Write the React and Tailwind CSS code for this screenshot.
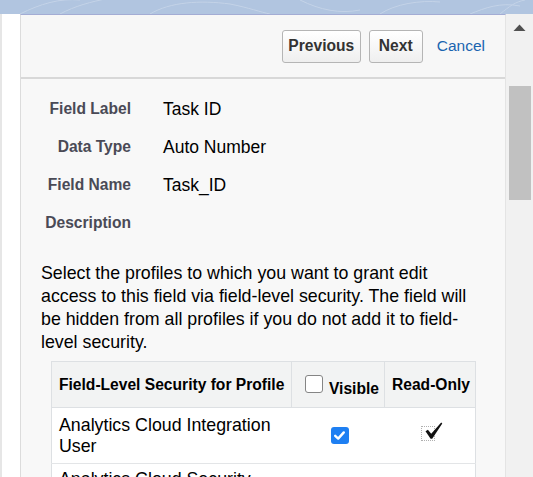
import React from "react";

const font = { fontFamily: '"Liberation Sans", Arial, sans-serif' };

function Field({ label, value }) {
  return (
    <div className="flex h-[38px] items-center">
      <div className="w-[110px] text-right text-[15.6px] font-bold text-[#4a4a56]">{label}</div>
      <div className="ml-[32px] text-[17.5px] text-black">{value}</div>
    </div>
  );
}

function BlueCheck() {
  return (
    <div className="flex h-[17px] w-[18px] items-center justify-center rounded-[3px] bg-[#1e7ff2]">
      <svg width="13" height="13" viewBox="0 0 13 13">
        <path d="M2.2 6.8 L5.2 9.6 L10.8 3.4" fill="none" stroke="white" strokeWidth="2.4" strokeLinecap="round" strokeLinejoin="round" />
      </svg>
    </div>
  );
}

function ReadOnlyCheck() {
  return (
    <div className="relative -mt-[8px] h-[20px] w-[22px]">
      <div className="absolute left-0 top-[4px] h-[15px] w-[14px] border border-dotted border-[#b0b0b0]" />
      <svg className="absolute left-[4px] top-0" width="18" height="18" viewBox="0 0 18 18">
        <path d="M0.5 9.2 L2.9 7.8 L6.2 11.8 L16.2 0.5 L17.3 1.4 L7.2 16.8 L5.6 16.8 Z" fill="#111" />
      </svg>
    </div>
  );
}

export default function App() {
  return (
    <div className="flex h-[477px] w-[533px] flex-col overflow-hidden bg-white" style={font}>
      {/* top band */}
      <div className="relative h-[14px] w-full shrink-0 overflow-hidden bg-[#b1c5e0]">
        <svg className="absolute inset-0" width="533" height="14" viewBox="0 0 533 14">
          <g fill="none" stroke="#c9d7ea" strokeWidth="1" opacity="0.8">
            <path d="M20 14 C40 4 60 -2 80 0" />
            <path d="M60 14 C75 6 90 2 110 -2" />
            <path d="M150 14 C170 2 200 0 230 4 C250 8 260 12 270 14" />
            <path d="M300 0 C320 10 340 14 360 10" />
            <path d="M380 14 C395 4 420 0 440 2" />
            <path d="M470 14 C485 8 500 2 520 6" />
            <path d="M500 14 C510 6 515 2 525 0" />
          </g>
        </svg>
      </div>
      <div className="flex min-h-0 flex-1">
        {/* left strip */}
        <div className="w-[20px] shrink-0 border-l-2 border-[#e6e6e6] bg-white" />
        {/* panel */}
        <div className="flex min-w-0 flex-1 flex-col border-l border-r border-t border-l-[#dcdcdc] border-r-[#e4e4e4] border-t-[#a3acd4] bg-[#f8f8f8]">
          <div className="flex h-[64px] shrink-0 items-center justify-end border-b-2 border-[#d8d8d8] bg-[#f7f7f7] pr-[20px]">
            <button className="h-[33px] w-[79px] rounded-[3px] border border-[#b5b5b5] bg-gradient-to-b from-white to-[#efefef] text-[15.6px] font-bold text-[#333]">
              Previous
            </button>
            <button className="ml-[8px] h-[33px] w-[54px] rounded-[3px] border border-[#b5b5b5] bg-gradient-to-b from-white to-[#efefef] text-[15.6px] font-bold text-[#333]">
              Next
            </button>
            <span className="ml-[14px] text-[15.5px] text-[#1a64b0]">Cancel</span>
          </div>
          <div className="pt-[11px]">
            <Field label="Field Label" value="Task ID" />
            <Field label="Data Type" value="Auto Number" />
            <Field label="Field Name" value="Task_ID" />
            <Field label="Description" value="" />
          </div>
          <p className="ml-[20px] mr-[26px] mt-[20px] text-[17.8px] leading-[23px] text-black">
            Select the profiles to which you want to grant edit access to this field via field-level security. The field will be hidden from all profiles if you do not add it to field-level security.
          </p>
          <div className="ml-[30px] mt-[7px] w-[424px]">
            <table className="w-[424px] table-fixed border-collapse border border-[#dde0e3]">
              <colgroup>
                <col className="w-[240px]" />
                <col className="w-[93px]" />
                <col className="w-[91px]" />
              </colgroup>
              <thead>
                <tr className="h-[46px] bg-[#f2f3f3]">
                  <th className="border border-[#dde0e3] pl-[7px] text-left text-[15.6px] font-bold text-black">
                    Field-Level Security for Profile
                  </th>
                  <th className="border border-[#dde0e3] p-0 text-left text-[15.6px] font-bold text-black">
                    <div className="flex items-center pl-[13px]">
                      <div className="h-[18px] w-[18px] shrink-0 rounded-[3px] border-[1.5px] border-[#858585] bg-white" />
                      <span className="ml-[6px] mt-[9px]">Visible</span>
                    </div>
                  </th>
                  <th className="border border-[#dde0e3] pl-[7px] text-left text-[15.6px] font-bold text-black">
                    Read-Only
                  </th>
                </tr>
              </thead>
              <tbody>
                <tr className="h-[56px] bg-white">
                  <td className="border-t border-[#e3e5e7] pl-[7px] text-[17.8px] leading-[21px] text-black">
                    Analytics Cloud Integration User
                  </td>
                  <td className="border-t border-[#e3e5e7]">
                    <div className="flex justify-center pl-[3px]">
                      <BlueCheck />
                    </div>
                  </td>
                  <td className="border-t border-[#e3e5e7]">
                    <div className="flex justify-center pl-[5px]">
                      <ReadOnlyCheck />
                    </div>
                  </td>
                </tr>
                <tr className="h-[56px] bg-white">
                  <td className="border-t border-[#e3e5e7] pl-[7px] pt-[5px] align-top text-[17.8px] leading-[21px] text-black">
                    Analytics Cloud Security User
                  </td>
                  <td className="border-t border-[#e3e5e7]" />
                  <td className="border-t border-[#e3e5e7]" />
                </tr>
              </tbody>
            </table>
          </div>
        </div>
        {/* scrollbar */}
        <div className="relative w-[27px] shrink-0 bg-[#f1f1f1]">
          <svg className="absolute left-[7px] top-[10px]" width="13" height="8" viewBox="0 0 13 8">
            <path d="M6.5 0.5 L12.5 7 L0.5 7 Z" fill="#505050" />
          </svg>
          <div className="absolute left-[3px] top-[72px] h-[114px] w-[22px] bg-[#c1c1c1]" />
        </div>
      </div>
    </div>
  );
}
